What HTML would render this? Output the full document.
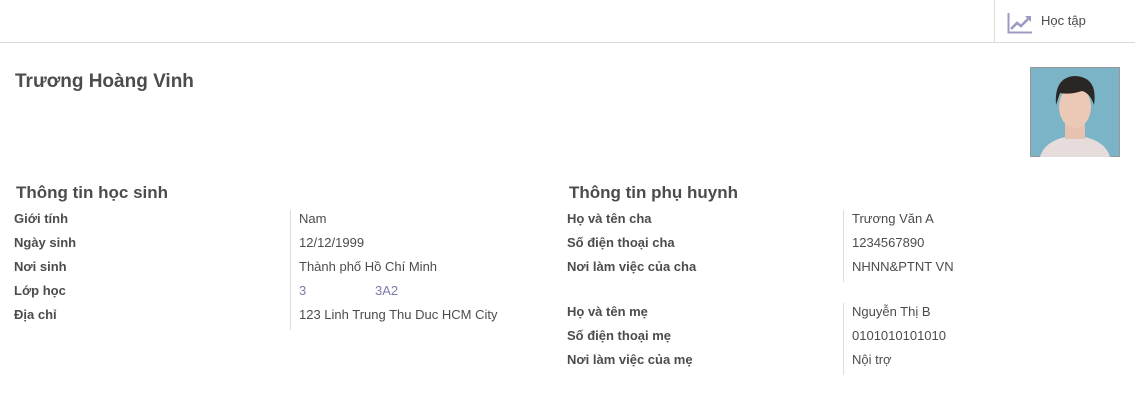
<!DOCTYPE html>
<html><head><meta charset="utf-8"><style>
body{margin:0;width:1135px;height:416px;background:#fff;font-family:"Liberation Sans",Arial,sans-serif;color:#4c4c4c;position:relative;overflow:hidden;font-size:13px}
.a{position:absolute;white-space:nowrap;line-height:16px}
.b{font-weight:bold}
.l{color:#7c7bad}
.v{position:absolute;width:1px;background:#ddd}
</style></head><body>
<div style="position:absolute;left:0;top:42px;width:1135px;height:1px;background:#d9d9d9"></div>
<div class="v" style="left:994px;top:0;height:42px"></div>
<svg style="position:absolute;left:1007px;top:12px" width="26" height="22" viewBox="0 0 26 22">
<path d="M1.5 1v19.5H25" fill="none" stroke="#9c9bc4" stroke-width="2"/>
<path d="M4 17l6-6 4 3 8-8" fill="none" stroke="#9c9bc4" stroke-width="2.6"/>
<path d="M18 4h6v6z" fill="#9c9bc4"/>
</svg>
<div class="a" style="left:1041px;top:13px;font-size:13px">Học tập</div>

<div class="a b" style="left:15px;top:71px;font-size:19px;line-height:22px;color:#4c4c4c">Trương Hoàng Vinh</div>

<svg style="position:absolute;left:1030px;top:67px" width="90" height="90" viewBox="0 0 90 90">
<rect x="0.5" y="0.5" width="89" height="89" fill="#7bb4c6" stroke="#999"/>
<path d="M10 90 Q14 75 35 70 L55 70 Q76 75 80 90Z" fill="#e6dcdc"/>
<rect x="35" y="55" width="20" height="17" fill="#e8c2b0"/>
<ellipse cx="45" cy="40" rx="16" ry="21" fill="#ecc8b6"/>
<path d="M26 38 Q24 10 45 9 Q68 10 64 38 Q60 26 52 24 Q40 28 30 26 Q28 32 26 38Z" fill="#2a2624"/>
</svg>

<div class="a b" style="left:16px;top:184px;font-size:17px;line-height:18px;color:#4c4c4c">Thông tin học sinh</div>
<div class="v" style="left:290px;top:210px;height:120px"></div>
<div class="a b" style="left:14px;top:211px">Giới tính</div><div class="a" style="left:299px;top:211px">Nam</div>
<div class="a b" style="left:14px;top:235px">Ngày sinh</div><div class="a" style="left:299px;top:235px">12/12/1999</div>
<div class="a b" style="left:14px;top:259px">Nơi sinh</div><div class="a" style="left:299px;top:259px">Thành phố Hồ Chí Minh</div>
<div class="a b" style="left:14px;top:283px">Lớp học</div><div class="a l" style="left:299px;top:283px">3</div><div class="a l" style="left:375px;top:283px">3A2</div>
<div class="a b" style="left:14px;top:307px">Địa chỉ</div><div class="a" style="left:299px;top:307px">123 Linh Trung Thu Duc HCM City</div>

<div class="a b" style="left:569px;top:184px;font-size:17px;line-height:18px">Thông tin phụ huynh</div>
<div class="v" style="left:843px;top:210px;height:72px"></div>
<div class="v" style="left:843px;top:303px;height:72px"></div>
<div class="a b" style="left:567px;top:211px">Họ và tên cha</div><div class="a" style="left:852px;top:211px">Trương Văn A</div>
<div class="a b" style="left:567px;top:235px">Số điện thoại cha</div><div class="a" style="left:852px;top:235px">1234567890</div>
<div class="a b" style="left:567px;top:259px">Nơi làm việc của cha</div><div class="a" style="left:852px;top:259px">NHNN&amp;PTNT VN</div>
<div class="a b" style="left:567px;top:304px">Họ và tên mẹ</div><div class="a" style="left:852px;top:304px">Nguyễn Thị B</div>
<div class="a b" style="left:567px;top:328px">Số điện thoại mẹ</div><div class="a" style="left:852px;top:328px">0101010101010</div>
<div class="a b" style="left:567px;top:352px">Nơi làm việc của mẹ</div><div class="a" style="left:852px;top:352px">Nội trợ</div>
</body></html>
